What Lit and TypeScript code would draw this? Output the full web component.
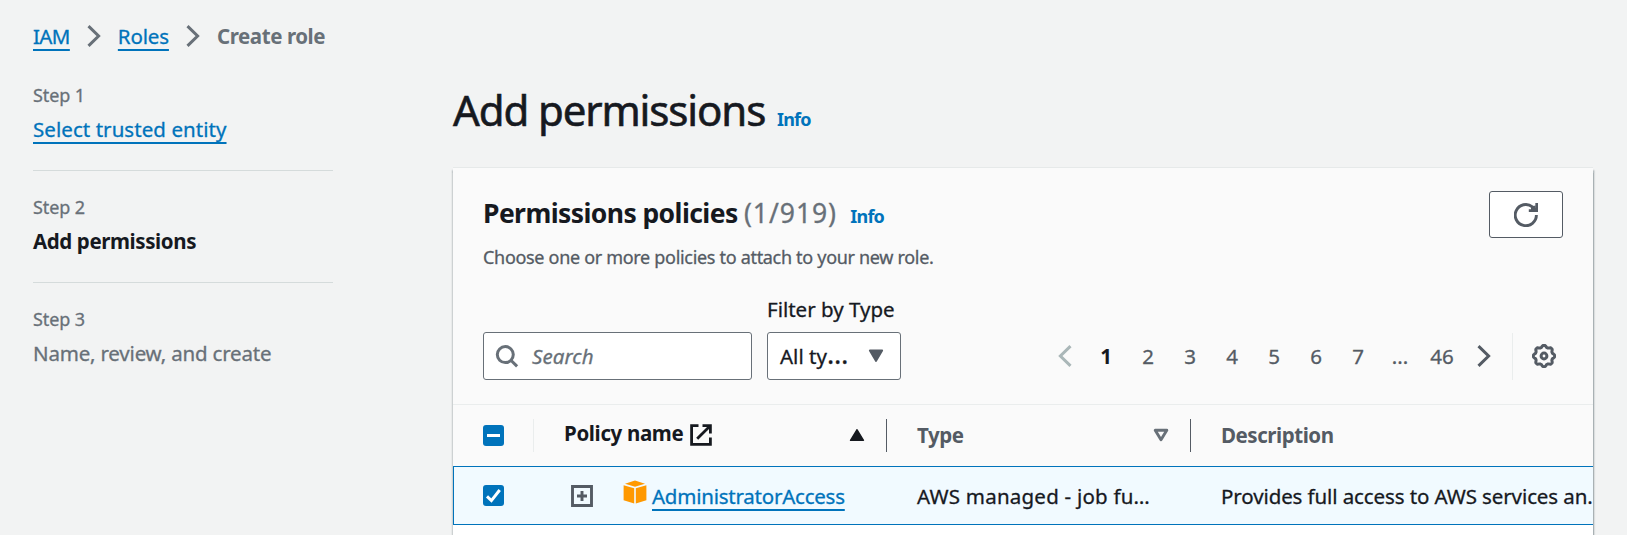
import { LitElement, html, css } from "lit";
import { customElement, state } from "lit/decorators.js";

const chevronRight = html`<svg class="chevron" viewBox="0 0 14 22" width="14" height="22"><path d="M1.5 1.2 11.6 11 1.5 20.8" /></svg>`;
const chevronLeft = html`<svg class="chevron" viewBox="0 0 14 22" width="14" height="22"><path d="M12.5 1.2 2.4 11l10.1 9.8" /></svg>`;

const refreshIcon = html`<svg viewBox="0 0 24 24" width="24" height="24" fill="none" stroke="#545b64" stroke-width="2.9">
  <path d="M22.4 12a10.6 10.6 0 1 1-4-8.2l3 3" />
  <path d="M14.8 7.6h8V0" />
  <path d="M17 7V3.6l4.6-1.2V7z" fill="#545b64" stroke="none" />
</svg>`;

const gearPath = (() => {
  const points: string[] = [];
  for (let i = 0; i <= 96; i++) {
    const angle = (i / 96) * Math.PI * 2;
    const wave = Math.max(-0.75, Math.min(0.75, Math.cos(8 * angle)));
    const radius = 9.75 + wave * 1.2;
    points.push(`${(12 + radius * Math.sin(angle)).toFixed(2)} ${(12 - radius * Math.cos(angle)).toFixed(2)}`);
  }
  return `M${points.join("L")}Z`;
})();
const gearIcon = html`<svg viewBox="0 0 24 24" width="24" height="24" fill="none" stroke="#545b64" stroke-width="3" stroke-linejoin="round">
  <path d=${gearPath} /><circle cx="12" cy="12" r="2.9" />
</svg>`;

const searchIcon = html`<svg viewBox="0 0 24 24" width="24" height="24" fill="none" stroke="#687078" stroke-width="3">
  <circle cx="10.3" cy="10.6" r="8" /><path d="m15.9 16.2 6.2 6.2" />
</svg>`;

const caretFilled = html`<svg viewBox="0 0 16 14" width="16" height="14"><path d="M1.8 1.5h12.4L8 12z" fill="#545b64" stroke="#545b64" stroke-width="1.8" stroke-linejoin="round" /></svg>`;
const sortAscending = html`<svg viewBox="0 0 16 14" width="16" height="14"><path d="M1.6 12.3h12.8L8 1.8z" fill="#16191f" stroke="#16191f" stroke-width="1.6" stroke-linejoin="round" /></svg>`;
const sortNone = html`<svg viewBox="0 0 16 14" width="16" height="14"><path d="M2.2 2.3h11.6L8 11.8z" fill="none" stroke="#687078" stroke-width="2.9" stroke-linejoin="round" /></svg>`;

const externalIcon = html`<svg viewBox="0 0 24 24" width="24" height="24" fill="none" stroke="#16191f" stroke-width="2.8">
  <path d="M9.5 2.6H2.6v18.8h18.8V14.5" /><path d="M13.5 2.6h7.9v7.9" /><path d="M21 3 8.2 15.8" />
</svg>`;

const expandIcon = html`<svg viewBox="0 0 22 22" width="22" height="22" fill="none" stroke="#545b64" stroke-width="2.9">
  <path d="M1.5 1.5h19v19h-19zM11 6v10M6 11h10" />
</svg>`;

const cubeIcon = html`<svg viewBox="0 0 24 24" width="24" height="24" fill="#f90">
  <path d="M12 .6 22 3.7 12 6.8 2 3.7z" /><path d="M.6 5.2 11.2 8.3V23.6L.6 20.2z" /><path d="M23.4 5.2 12.8 8.3v15.3l10.6-3.4z" />
</svg>`;

@customElement("policy-checkbox")
class PolicyCheckbox extends LitElement {
  static properties = { mixed: { type: Boolean } };
  declare mixed: boolean;
  static styles = css`
    :host { display: block; width: 21px; height: 21px; }
    svg { display: block; }
  `;
  render() {
    return html`<svg viewBox="0 0 21 21" width="21" height="21" fill="none" stroke="#fff">
      <rect width="21" height="21" rx="3" fill="#0073bb" stroke="none" />
      <path d=${this.mixed ? "M4 10.5h13" : "m4 11.4 4.4 4.2L16.7 5"} stroke-width="3" />
    </svg>`;
  }
}

@customElement("app-root")
class AppRoot extends LitElement {
  @state() private pages = ["1", "2", "3", "4", "5", "6", "7", "...", "46"];

  static styles = css`
    :host {
      display: block; height: 535px; overflow: hidden; background: #f2f3f3; color: #16191f;
      font: 20.5px/30px "Noto Sans", "Open Sans", sans-serif; box-sizing: border-box; padding: 21px 33px 0;
      white-space: nowrap; -webkit-text-stroke: 0.3px currentColor;
    }
    * { box-sizing: border-box; }
    svg { display: block; flex: none; }
    a { color: #0073bb; text-decoration: underline; text-decoration-thickness: 2px; text-underline-offset: 5px; text-decoration-skip-ink: none; }
    .crumbs { display: flex; align-items: center; height: 30px; color: #687078; }
    .crumbs svg { margin: 0 17px; }
    .crumbs .iam { letter-spacing: -0.6px; }
    .crumbs .roles { letter-spacing: -0.15px; }
    .current { font-weight: 700; letter-spacing: -0.42px; }
    .chevron { fill: none; stroke: currentColor; stroke-width: 3; stroke-linejoin: miter; }
    .body { display: grid; grid-template-columns: 300px 1140px; column-gap: 120px; }
    .steps { margin-top: 32px; }
    .step { color: #687078; padding-bottom: 26px; }
    .step + .step { border-top: 1px solid #d5dbdb; padding-top: 24px; }
    .number { font-size: 18px; line-height: 24px; letter-spacing: -0.1px; margin-bottom: 7px; }
    .link { letter-spacing: 0.06px; }
    .active { font-weight: 700; color: #16191f; letter-spacing: -0.4px; }
    .pending { letter-spacing: -0.19px; }
    .main { margin-top: 33px; }
    h1 { margin: 0; font-size: 42px; line-height: 52px; font-weight: 400; letter-spacing: -1.12px; -webkit-text-stroke-width: 0.6px; }
    .info { font-size: 18px; line-height: 24px; font-weight: 700; color: #0073bb; letter-spacing: -0.8px; }
    h1 .info { margin-left: 2px; }
    .info, .current, .active, h2, .head, .page.on { -webkit-text-stroke-width: 0; }
    .card { margin-top: 32px; height: 370px; background: #fff; overflow: hidden; box-shadow: 0 -1px 0 0 #e6e9e9, 1.5px 1.5px 1.5px 0 rgba(0, 28, 36, 0.3), -1.5px 1.5px 1.5px 0 rgba(0, 28, 36, 0.3); }
    .top { height: 236px; background: #fafafa; padding: 23px 30px 0; }
    .title-row { display: flex; justify-content: space-between; align-items: flex-start; height: 54px; }
    h2 { margin: 5px 0 0; font-size: 26.5px; line-height: 34px; letter-spacing: -0.58px; }
    .count { font-weight: 400; color: #687078; letter-spacing: 0.95px; -webkit-text-stroke-width: 0.3px; }
    h2 .info { margin-left: 7px; }
    .refresh { width: 74px; height: 47px; background: #fff; border: 1px solid #545b64; border-radius: 3px; display: flex; align-items: center; justify-content: center; }
    .sub { font-size: 18px; line-height: 24px; color: #545b64; letter-spacing: -0.31px; }
    .tools { display: flex; align-items: flex-end; margin-top: 25px; height: 86px; }
    .field { height: 48px; border: 1px solid #687078; border-radius: 3px; background: #fff; display: flex; align-items: center; }
    .search { width: 269px; padding: 0 11px; gap: 13px; font-style: italic; color: #687078; letter-spacing: 0.1px; margin-right: 15px; }
    .search span, .select span { margin-top: -1px; }
    .filter-label { margin-bottom: 8px; }
    .select { width: 134px; padding: 0 16px 0 12px; justify-content: space-between; }
    .select .dots { letter-spacing: 0; font-size: 27px; line-height: 20px; }
    .pager { display: flex; align-items: center; height: 48px; margin-left: auto; color: #545b64; }
    .pager .previous { color: #aab7b8; margin-right: 13px; }
    .page { width: 42px; text-align: center; }
    .page.on { font-weight: 700; color: #16191f; }
    .pager .next { margin-left: 14px; }
    .settings { display: flex; align-items: center; height: 47px; border-left: 1px solid #eaeded; margin-left: 21px; padding: 0 7px 0 19px; }
    .row { display: grid; grid-template-columns: 81px 353px 304px 402px; height: 62px; }
    .head { background: #fafafa; border-top: 1px solid #eaeded; padding-bottom: 1px; font-weight: 700; color: #545b64; }
    .head > div { display: flex; align-items: center; }
    .head .check, .selected .check { padding-left: 30px; display: flex; align-items: center; }
    .head > div::after { content: ""; height: 33px; width: 1px; background: #545b64; margin-left: auto; }
    .head > .check::after { background: #eaeded; }
    .head > .last::after { display: none; }
    .name { padding-left: 30px; color: #16191f; }
    .name .label { letter-spacing: -0.35px; margin: -4px 6px 0 0; }
    .sort { margin: 0 21px 0 auto; }
    .head .type, .head .last { padding-left: 30px; letter-spacing: -0.45px; }
    .head > .name::after, .head > .type::after { margin-left: 0; }
    .selected { background: #f1faff; border: 1px solid #0073bb; border-right: 0; height: 59px; grid-template-columns: 80px 353px 304px 402px; align-items: center; }
    .selected .check { padding-left: 29px; }
    .policy { display: flex; align-items: center; padding-left: 37px; }
    .cube { margin: -7px 5px 0 30px; }
    .policy a { letter-spacing: -0.23px; }
    .cell { padding-left: 30px; letter-spacing: 0.22px; }
    .cell.description { letter-spacing: -0.1px; }
  `;

  render() {
    return html`
      <nav class="crumbs">
        <a class="iam">IAM</a>${chevronRight}<a class="roles">Roles</a>${chevronRight}<span class="current">Create role</span>
      </nav>
      <div class="body">
        <aside class="steps">
          <div class="step"><div class="number">Step 1</div><a class="link">Select trusted entity</a></div>
          <div class="step"><div class="number">Step 2</div><div class="active">Add permissions</div></div>
          <div class="step"><div class="number">Step 3</div><div class="pending">Name, review, and create</div></div>
        </aside>
        <main class="main">
          <h1>Add permissions <span class="info">Info</span></h1>
          <section class="card">
            <div class="top">
              <div class="title-row">
                <h2>Permissions policies <span class="count">(1/919)</span> <span class="info">Info</span></h2>
                <div class="refresh">${refreshIcon}</div>
              </div>
              <div class="sub">Choose one or more policies to attach to your new role.</div>
              <div class="tools">
                <div class="field search">${searchIcon}<span>Search</span></div>
                <div>
                  <div class="filter-label">Filter by Type</div>
                  <div class="field select"><span>All ty<span class="dots">…</span></span>${caretFilled}</div>
                </div>
                <div class="pager">
                  <div class="previous">${chevronLeft}</div>
                  ${this.pages.map((page, i) => html`<div class="page ${i === 0 ? "on" : ""}">${page}</div>`)}
                  <div class="next">${chevronRight}</div>
                  <div class="settings">${gearIcon}</div>
                </div>
              </div>
            </div>
            <div class="row head">
              <div class="check"><policy-checkbox mixed></policy-checkbox></div>
              <div class="name"><span class="label">Policy name</span>${externalIcon}<span class="sort">${sortAscending}</span></div>
              <div class="type">Type<span class="sort">${sortNone}</span></div>
              <div class="last">Description</div>
            </div>
            <div class="row selected">
              <div class="check"><policy-checkbox></policy-checkbox></div>
              <div class="policy">${expandIcon}<span class="cube">${cubeIcon}</span><a>AdministratorAccess</a></div>
              <div class="cell">AWS managed - job fu…</div>
              <div class="cell description">Provides full access to AWS services an.</div>
            </div>
          </section>
        </main>
      </div>
    `;
  }
}
